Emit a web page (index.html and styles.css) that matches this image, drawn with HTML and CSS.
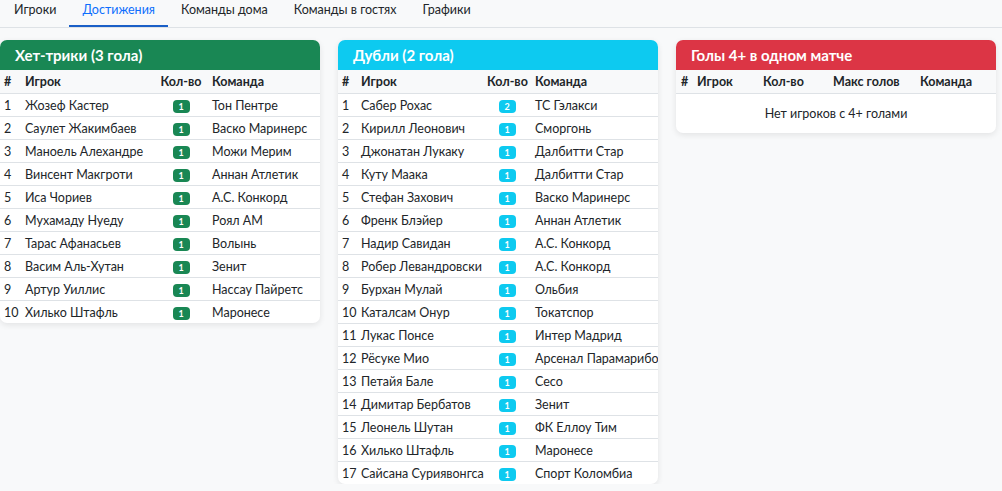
FILE: index.html
```html
<!DOCTYPE html>
<html lang="ru">
<head>
<meta charset="utf-8">
<title>Достижения</title>
<link rel="stylesheet" href="styles.css">
</head>
<body>
<nav class="tabs">
  <a class="tab">Игроки</a>
  <a class="tab active">Достижения</a>
  <a class="tab">Команды дома</a>
  <a class="tab">Команды в гостях</a>
  <a class="tab">Графики</a>
</nav>
<main class="grid">
  <section class="card">
    <header class="card-head green">Хет-трики (3 гола)</header>
    <table class="tbl t1">
      <colgroup><col class="c-n"><col class="c-p"><col class="c-q"><col class="c-t"></colgroup>
      <thead><tr><th>#</th><th>Игрок</th><th class="ctr">Кол-во</th><th>Команда</th></tr></thead>
      <tbody>
        <tr><td>1</td><td>Жозеф Кастер</td><td class="ctr"><span class="badge bg-green">1</span></td><td>Тон Пентре</td></tr>
        <tr><td>2</td><td>Саулет Жакимбаев</td><td class="ctr"><span class="badge bg-green">1</span></td><td>Васко Маринерс</td></tr>
        <tr><td>3</td><td>Маноель Алехандре</td><td class="ctr"><span class="badge bg-green">1</span></td><td>Можи Мерим</td></tr>
        <tr><td>4</td><td>Винсент Макгроти</td><td class="ctr"><span class="badge bg-green">1</span></td><td>Аннан Атлетик</td></tr>
        <tr><td>5</td><td>Иса Чориев</td><td class="ctr"><span class="badge bg-green">1</span></td><td>А.С. Конкорд</td></tr>
        <tr><td>6</td><td>Мухамаду Нуеду</td><td class="ctr"><span class="badge bg-green">1</span></td><td>Роял АМ</td></tr>
        <tr><td>7</td><td>Тарас Афанасьев</td><td class="ctr"><span class="badge bg-green">1</span></td><td>Волынь</td></tr>
        <tr><td>8</td><td>Васим Аль-Хутан</td><td class="ctr"><span class="badge bg-green">1</span></td><td>Зенит</td></tr>
        <tr><td>9</td><td>Артур Уиллис</td><td class="ctr"><span class="badge bg-green">1</span></td><td>Нассау Пайретс</td></tr>
        <tr><td>10</td><td>Хилько Штафль</td><td class="ctr"><span class="badge bg-green">1</span></td><td>Маронесе</td></tr>
      </tbody>
    </table>
  </section>
  <section class="card">
    <header class="card-head cyan">Дубли (2 гола)</header>
    <table class="tbl t2">
      <colgroup><col class="c-n"><col class="c-p"><col class="c-q"><col class="c-t"></colgroup>
      <thead><tr><th>#</th><th>Игрок</th><th class="ctr">Кол-во</th><th>Команда</th></tr></thead>
      <tbody>
        <tr><td>1</td><td>Сабер Рохас</td><td class="ctr"><span class="badge bg-cyan">2</span></td><td>ТС Гэлакси</td></tr>
        <tr><td>2</td><td>Кирилл Леонович</td><td class="ctr"><span class="badge bg-cyan">1</span></td><td>Сморгонь</td></tr>
        <tr><td>3</td><td>Джонатан Лукаку</td><td class="ctr"><span class="badge bg-cyan">1</span></td><td>Далбитти Стар</td></tr>
        <tr><td>4</td><td>Куту Маака</td><td class="ctr"><span class="badge bg-cyan">1</span></td><td>Далбитти Стар</td></tr>
        <tr><td>5</td><td>Стефан Захович</td><td class="ctr"><span class="badge bg-cyan">1</span></td><td>Васко Маринерс</td></tr>
        <tr><td>6</td><td>Френк Блэйер</td><td class="ctr"><span class="badge bg-cyan">1</span></td><td>Аннан Атлетик</td></tr>
        <tr><td>7</td><td>Надир Савидан</td><td class="ctr"><span class="badge bg-cyan">1</span></td><td>А.С. Конкорд</td></tr>
        <tr><td>8</td><td>Робер Левандровски</td><td class="ctr"><span class="badge bg-cyan">1</span></td><td>А.С. Конкорд</td></tr>
        <tr><td>9</td><td>Бурхан Мулай</td><td class="ctr"><span class="badge bg-cyan">1</span></td><td>Ольбия</td></tr>
        <tr><td>10</td><td>Каталсам Онур</td><td class="ctr"><span class="badge bg-cyan">1</span></td><td>Токатспор</td></tr>
        <tr><td>11</td><td>Лукас Понсе</td><td class="ctr"><span class="badge bg-cyan">1</span></td><td>Интер Мадрид</td></tr>
        <tr><td>12</td><td>Рёсуке Мио</td><td class="ctr"><span class="badge bg-cyan">1</span></td><td>Арсенал Парамарибо</td></tr>
        <tr><td>13</td><td>Петайя Бале</td><td class="ctr"><span class="badge bg-cyan">1</span></td><td>Сесо</td></tr>
        <tr><td>14</td><td>Димитар Бербатов</td><td class="ctr"><span class="badge bg-cyan">1</span></td><td>Зенит</td></tr>
        <tr><td>15</td><td>Леонель Шутан</td><td class="ctr"><span class="badge bg-cyan">1</span></td><td>ФК Еллоу Тим</td></tr>
        <tr><td>16</td><td>Хилько Штафль</td><td class="ctr"><span class="badge bg-cyan">1</span></td><td>Маронесе</td></tr>
        <tr><td>17</td><td>Сайсана Суриявонгса</td><td class="ctr"><span class="badge bg-cyan">1</span></td><td>Спорт Коломбиа</td></tr>
      </tbody>
    </table>
  </section>
  <section class="card">
    <header class="card-head red">Голы 4+ в одном матче</header>
    <table class="tbl t3">
      <colgroup><col class="c-n"><col class="c-p"><col class="c-q"><col class="c-m"><col class="c-t"></colgroup>
      <thead><tr><th>#</th><th>Игрок</th><th>Кол-во</th><th>Макс голов</th><th>Команда</th></tr></thead>
      <tbody>
        <tr><td colspan="5" class="empty">Нет игроков с 4+ голами</td></tr>
      </tbody>
    </table>
  </section>
</main>
</body>
</html>
```
FILE: styles.css
```css
* { box-sizing: border-box; }
html, body { margin: 0; padding: 0; }
body {
  background: #f8f9fa;
  font-family: Lato, Roboto, sans-serif;
  font-size: 12.5px;
  color: #212529;
}
.tabs {
  display: flex;
  height: 28px;
  border-bottom: 1px solid #dee2e6;
  padding-left: 1px;
}
.tab {
  display: block;
  padding: 0 13px;
  line-height: 20px;
  font-size: 12.5px;
  color: #212529;
  border-bottom: 2px solid transparent;
  height: 27px;
}
.tab.active {
  color: #0d6efd;
  border-bottom-color: #1a5fc7;
}
.grid {
  display: grid;
  grid-template-columns: repeat(3, 320px);
  column-gap: 18px;
  align-items: start;
  padding-top: 12px;
}
.card {
  background: #fff;
  border-radius: 7px;
  overflow: hidden;
  box-shadow: 0 2px 6px rgba(0,0,0,0.09);
}
.card-head {
  height: 30px;
  line-height: 30px;
  padding-left: 15px;
  font-size: 15px;
  font-weight: 700;
  color: #fff;
}
.green { background: #198754; }
.cyan { background: #0dcaf0; }
.red { background: #dc3545; }
.tbl {
  width: 100%;
  border-collapse: collapse;
  table-layout: fixed;
}
.tbl th, .tbl td {
  padding: 3px 4px 1px;
  height: 23px;
  line-height: 18px;
  text-align: left;
  white-space: nowrap;
  border-bottom: 1px solid #dee2e6;
}
.tbl th {
  font-weight: 700;
  background: #f8f9fa;
}
.tbl tbody tr:last-child td { border-bottom: none; }
.tbl .ctr { text-align: center; }
.t1 .c-n { width: 21px; }
.t1 .c-p { width: 133px; }
.t1 .c-q { width: 54px; }
.t1 .c-t { width: 112px; }
.t2 .c-n { width: 19px; }
.t2 .c-p { width: 126px; }
.t2 .c-q { width: 48px; }
.t2 .c-t { width: 127px; }
.t3 .c-n { width: 17px; }
.t3 .c-p { width: 66px; }
.t3 .c-q { width: 70px; }
.t3 .c-m { width: 87px; }
.t3 .c-t { width: 80px; }
.t3 th:first-child { padding-left: 5px; }
.badge {
  display: inline-block;
  min-width: 17px;
  height: 13px;
  line-height: 13px;
  padding: 0 4px;
  border-radius: 4px;
  font-size: 9px;
  font-weight: 700;
  color: #fff;
  vertical-align: middle;
}
.bg-green { background: #198754; }
.bg-cyan { background: #0dcaf0; }
.tbl td.empty {
  text-align: center;
  height: 40px;
  color: #212529;
}
```
